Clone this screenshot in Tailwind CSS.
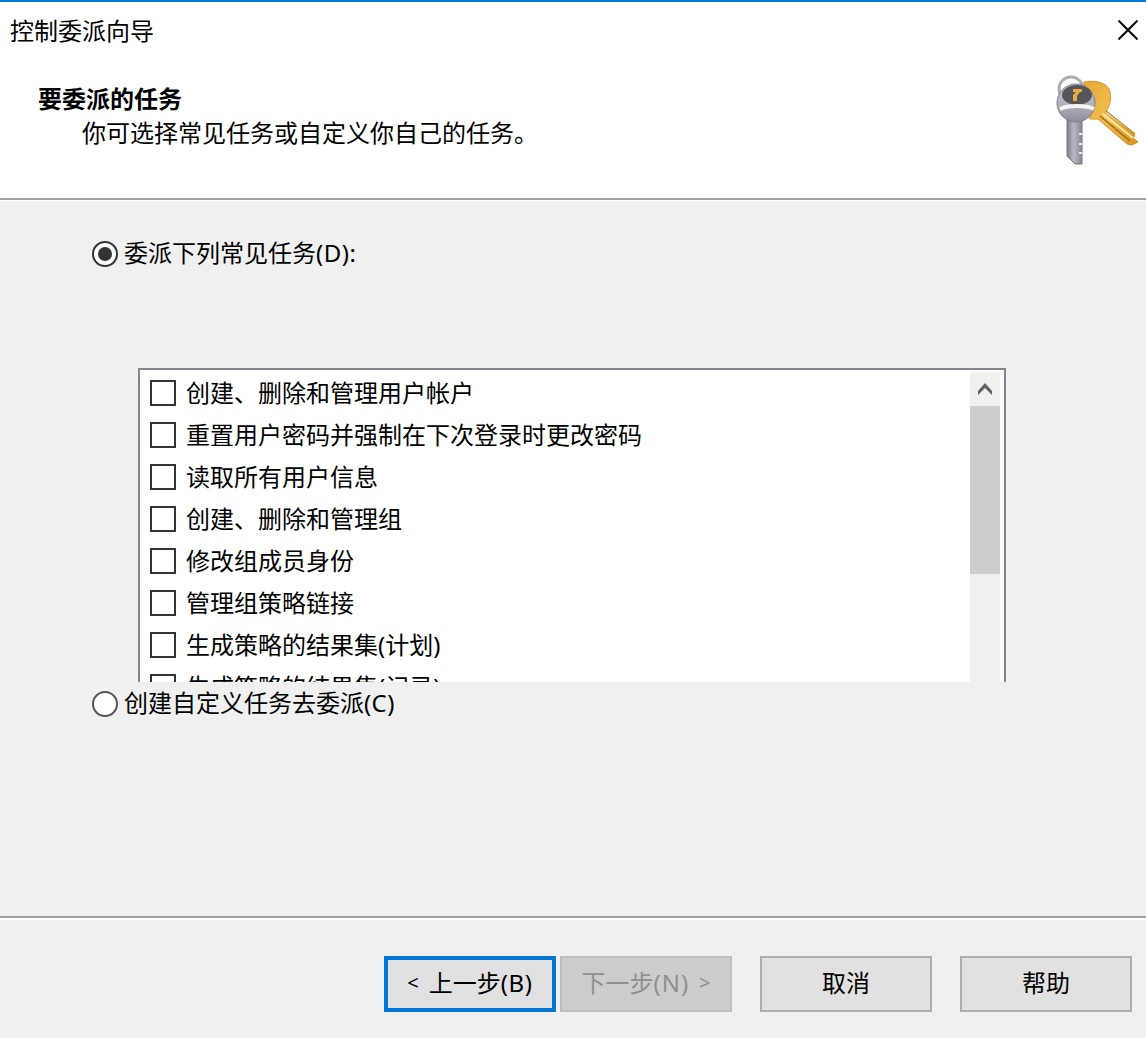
<!DOCTYPE html>
<html lang="zh-CN">
<head>
  <meta charset="UTF-8" />
  <title>控制委派向导</title>
  <script src="https://cdn.jsdelivr.net/npm/@tailwindcss/browser@4"></script>
</head>
<body class="bg-[#f0f0f0] text-black font-['Noto_Sans','Noto_Sans_CJK_SC',sans-serif] text-[24px] leading-[32px]">
  <div class="w-[1146px] h-[1038px] flex flex-col overflow-hidden">

    <!-- Header -->
    <header class="relative h-[201px] shrink-0 bg-white border-t-2 border-[#0078d7]">
      <div class="h-[196px] border-b-2 border-[#a0a0a0] box-content">
        <div class="pl-[10px] pt-[13px]">控制委派向导</div>
        <div class="pl-[38px] pt-[36px] font-bold">要委派的任务</div>
        <div class="pl-[82px] pt-[2px]">你可选择常见任务或自定义你自己的任务。</div>
      </div>
      <svg class="absolute left-[1118px] top-[18px]" width="20" height="20" viewBox="0 0 20 20" fill="none" stroke="#000" stroke-width="2">
        <path d="M0.5 0.5L19.5 19.5M19.5 0.5L0.5 19.5" />
      </svg>
      <!-- keys -->
      <svg class="absolute left-[1050px] top-[70px]" width="92" height="98" viewBox="0 0 92 98">
        <defs>
          <linearGradient id="gold" x1="0" y1="0" x2="1" y2="1">
            <stop offset="0" stop-color="#e8a437" />
            <stop offset="0.5" stop-color="#f0c050" />
            <stop offset="1" stop-color="#d98f1c" />
          </linearGradient>
          <linearGradient id="silver" x1="0" y1="0" x2="0" y2="1">
            <stop offset="0" stop-color="#c4c4cc" />
            <stop offset="0.5" stop-color="#b4b4be" />
            <stop offset="1" stop-color="#8e8e9c" />
          </linearGradient>
          <linearGradient id="blade" x1="0" y1="0" x2="1" y2="0">
            <stop offset="0" stop-color="#7f7f8c" />
            <stop offset="0.45" stop-color="#b8b8c4" />
            <stop offset="1" stop-color="#8a8a96" />
          </linearGradient>
          <filter id="soft" x="-5%" y="-5%" width="110%" height="110%">
            <feGaussianBlur stdDeviation="0.55" />
          </filter>
        </defs>
        <g filter="url(#soft)">
          <!-- gold key -->
          <path d="M34 10C44 8 55 10 59 17C62 24 61 33 55 41L85 63L83 66L88 70L82 73L77 72L48 47L40 47Z" fill="url(#gold)" stroke="#d0932a" stroke-width="1" />
          <path d="M50 44L80 69" stroke="#a86a10" stroke-width="1.6" fill="none" />
          <path d="M53 42L83 66" stroke="#fbe7a6" stroke-width="2" fill="none" />
          <path d="M56 39L85 62" stroke="#c9831a" stroke-width="1.4" fill="none" />
          <!-- silver key -->
          <circle cx="21" cy="17" r="12" fill="none" stroke="#adadb6" stroke-width="3" />
          <path d="M17 48V84L25 92H32V48Z" fill="url(#blade)" stroke="#74747f" stroke-width="1" />
          <path d="M29 62h3M29 72h3M29 81h3" stroke="#ececf0" stroke-width="2" />
          <circle cx="26" cy="31" r="19" fill="url(#silver)" stroke="#7d7d88" stroke-width="1" />
          <ellipse cx="27" cy="23" rx="15" ry="10" fill="#55555c" />
          <path d="M23 17h9v3h-2l-3 4v5h-4v-6l3-3h-3z" fill="#e6ad3a" />
          <path d="M10 37C18 33 36 33 44 37" stroke="#f4f4f6" stroke-width="4" fill="none" />
        </g>
      </svg>
    </header>

    <!-- Body -->
    <main class="flex-1 pt-[37px]">
      <label class="flex items-center h-[32px] pl-[92px]">
        <span class="w-[26px] h-[26px] rounded-full border-2 border-[#333] bg-white flex items-center justify-center">
          <span class="w-[14px] h-[14px] rounded-full bg-[#333]"></span>
        </span>
        <span class="ml-[6px] pb-[2px]">委派下列常见任务<span class="tracking-[0.5px]">(D):</span></span>
      </label>

      <div class="ml-[138px] mt-[98px] w-[868px] h-[314px] overflow-hidden border-2 border-b-0 border-[#82878f] bg-white flex">
        <ul class="w-[830px] pt-[2px] pl-[10px]">
          <li class="h-[42px] flex items-center"><span class="w-[26px] h-[26px] border-2 border-[#333] bg-white shrink-0"></span><span class="ml-[10px]">创建、删除和管理用户帐户</span></li>
          <li class="h-[42px] flex items-center"><span class="w-[26px] h-[26px] border-2 border-[#333] bg-white shrink-0"></span><span class="ml-[10px]">重置用户密码并强制在下次登录时更改密码</span></li>
          <li class="h-[42px] flex items-center"><span class="w-[26px] h-[26px] border-2 border-[#333] bg-white shrink-0"></span><span class="ml-[10px]">读取所有用户信息</span></li>
          <li class="h-[42px] flex items-center"><span class="w-[26px] h-[26px] border-2 border-[#333] bg-white shrink-0"></span><span class="ml-[10px]">创建、删除和管理组</span></li>
          <li class="h-[42px] flex items-center"><span class="w-[26px] h-[26px] border-2 border-[#333] bg-white shrink-0"></span><span class="ml-[10px]">修改组成员身份</span></li>
          <li class="h-[42px] flex items-center"><span class="w-[26px] h-[26px] border-2 border-[#333] bg-white shrink-0"></span><span class="ml-[10px]">管理组策略链接</span></li>
          <li class="h-[42px] flex items-center"><span class="w-[26px] h-[26px] border-2 border-[#333] bg-white shrink-0"></span><span class="ml-[10px]">生成策略的结果集(计划)</span></li>
          <li class="h-[42px] flex items-center"><span class="w-[26px] h-[26px] border-2 border-[#333] bg-white shrink-0"></span><span class="ml-[10px]">生成策略的结果集(记录)</span></li>
        </ul>
        <div class="w-[30px] mt-[2px] bg-[#f0f0f0] shrink-0">
          <div class="h-[34px] flex items-center justify-center">
            <svg width="14" height="12" viewBox="0 0 14 12" fill="#606060">
              <path d="M7 0L14 8V12L7 5L0 12V8Z" />
            </svg>
          </div>
          <div class="h-[168px] bg-[#cdcdcd]"></div>
        </div>
      </div>

      <label class="flex items-center h-[32px] pl-[92px] mt-[6px]">
        <span class="w-[26px] h-[26px] rounded-full border-2 border-[#555] bg-white"></span>
        <span class="ml-[6px] pb-[2px]">创建自定义任务去委派<span class="tracking-[0.4px]">(C)</span></span>
      </label>
    </main>

    <!-- Footer -->
    <footer class="h-[122px] shrink-0">
      <div class="h-[2px] bg-[#a0a0a0]"></div>
      <div class="h-[2px] bg-white"></div>
      <div class="flex pt-[36px] pl-[384px]">
        <button class="w-[172px] h-[56px] border-4 border-[#0078d7] bg-[#e1e1e1] flex items-center justify-center leading-[30px] pb-[2px]"><span class="text-[20px] mr-[10px]">&lt;</span>上一步<span class="tracking-[0.7px]">(B)</span></button>
        <button class="w-[172px] h-[56px] ml-[4px] border-2 border-[#bfbfbf] bg-[#cccccc] text-[#8f8f8f] flex items-center justify-center leading-[30px] pb-[2px]">下一步<span class="tracking-[1px]">(N)</span><span class="text-[20px] ml-[10px]">&gt;</span></button>
        <button class="w-[172px] h-[56px] ml-[28px] border-2 border-[#adadad] bg-[#e1e1e1] flex items-center justify-center leading-[30px] pb-[2px]">取消</button>
        <button class="w-[172px] h-[56px] ml-[28px] border-2 border-[#adadad] bg-[#e1e1e1] flex items-center justify-center leading-[30px] pb-[2px]">帮助</button>
      </div>
    </footer>
  </div>
</body>
</html>
